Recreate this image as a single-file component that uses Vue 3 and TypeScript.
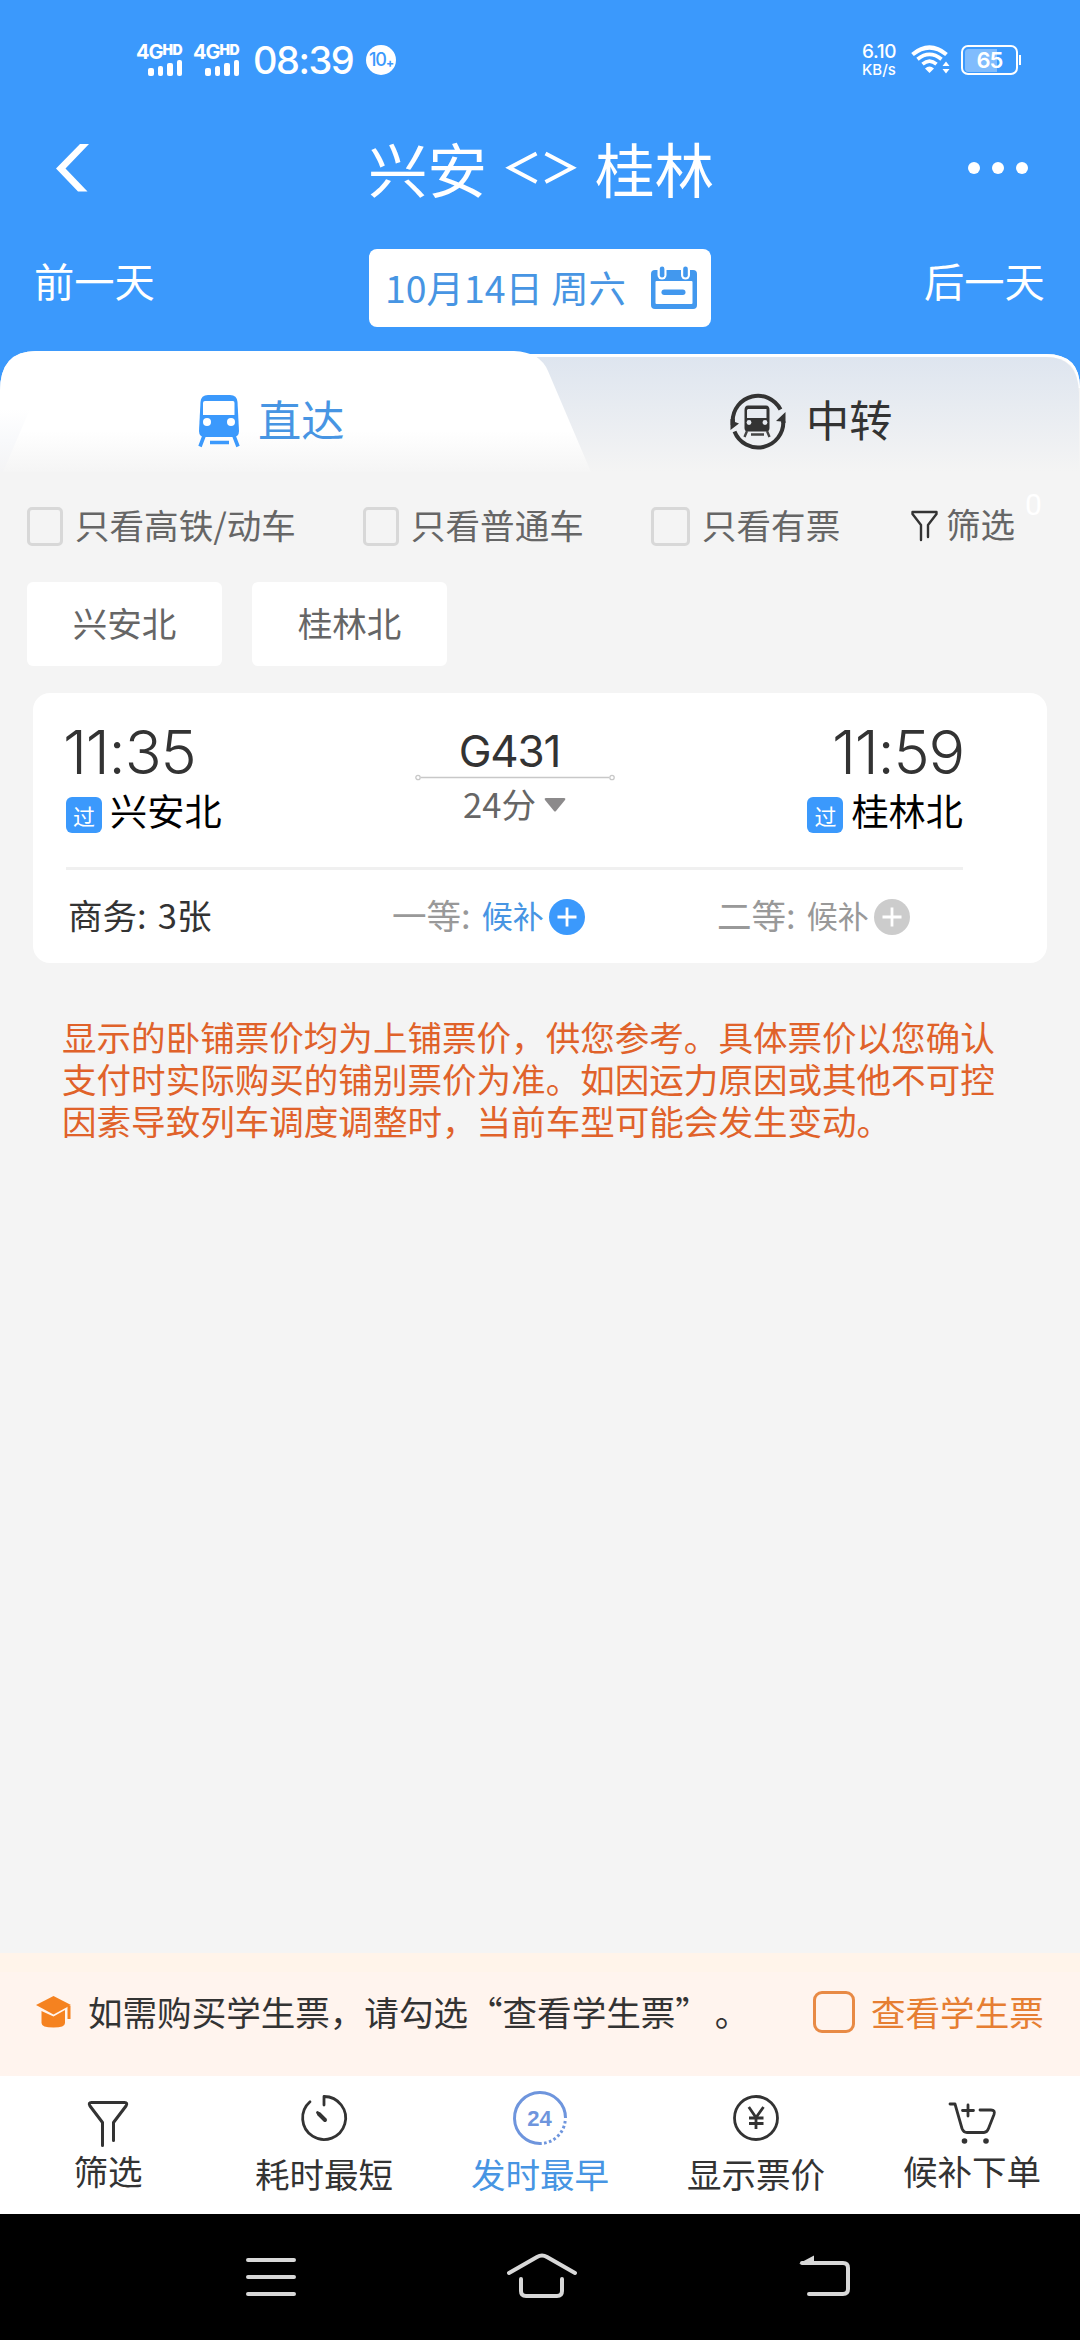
<script setup lang="ts">
interface Filter { label: string; wide?: boolean }
interface Stop { time: string; name: string }
interface Seat { label: string; value: string; state: 'open' | 'wait' | 'closed' }
interface Sort { label: string; icon: string; active?: boolean; high?: boolean }

const filters: Filter[] = [
  { label: '只看高铁/动车' },
  { label: '只看普通车' },
  { label: '只看有票', wide: true },
]
const stations: string[] = ['兴安北', '桂林北']
const from: Stop = { time: '11:35', name: '兴安北' }
const to: Stop = { time: '11:59', name: '桂林北' }
const seats: Seat[] = [
  { label: '商务:', value: '3张', state: 'open' },
  { label: '一等:', value: '候补', state: 'wait' },
  { label: '二等:', value: '候补', state: 'closed' },
]
const sorts: Sort[] = [
  { label: '筛选', icon: 'funnel', high: true },
  { label: '耗时最短', icon: 'clock' },
  { label: '发时最早', icon: 'early', active: true },
  { label: '显示票价', icon: 'price' },
  { label: '候补下单', icon: 'cart', high: true },
]
const bars: number[] = [8, 10, 13, 16]
</script>

<template>
  <div class="screen">
    <header class="head">
      <div class="status">
        <div v-for="n in 2" :key="n" class="sim">
          <span class="net">4G<b>HD</b></span>
          <span class="bars"><i v-for="h in bars" :key="h" :style="{ height: h + 'px' }"></i></span>
        </div>
        <span class="clock">08:39</span>
        <span class="badge10">10<b>+</b></span>
        <span class="grow"></span>
        <span class="speed"><span>6.10</span><small>KB/s</small></span>
        <svg class="wifi" width="40" height="30" viewBox="0 0 40 30" fill="none" stroke="#fff">
          <path d="M1.500 9.500Q18.500 -4.500 35.500 9.500" stroke-width="4.200" />
          <path d="M6.500 14.300Q18.500 4.500 30.500 14.300" stroke-width="3.800" />
          <path d="M11.500 19.200Q18.500 13 25.500 19.200" stroke-width="3.600" />
          <path d="M14 23.500Q18.500 19.500 23 23.500L18.500 28Z" fill="#fff" stroke="none" />
          <path d="M31.500 21L35 16.500L38.500 21ZM31.500 24L35 28.500L38.500 24Z" fill="#fff" stroke="none" />
        </svg>
        <span class="battery"><span>65</span></span>
        <i class="nub"></i>
      </div>
      <div class="title">
        <svg class="back" width="34" height="48" viewBox="0 0 34 48"><path d="M24 0H33L9.500 24.500L31.500 47.500H22L0 24.500Z" fill="#fff" /></svg>
        <h1><span>兴安</span><svg width="68" height="34" viewBox="0 0 68 34" fill="none" stroke="#fff" stroke-width="4"><path d="M29.500 2.500L2.500 16.800L29.500 31M38.500 2.500L65.500 16.800L38.500 31" /></svg><span>桂林</span></h1>
        <div class="more"><i></i><i></i><i></i></div>
      </div>
      <div class="days">
        <span class="day">前一天</span>
        <div class="date">
          <span>10月14日 周六</span>
          <svg width="46" height="44" viewBox="0 0 46 44">
            <rect x="0" y="4" width="46" height="39" rx="4" fill="#4298ee" />
            <rect x="4.500" y="15" width="37" height="23" rx="1" fill="#fff" />
            <rect x="6.500" y="-3" width="9" height="16.500" rx="4.500" fill="#fff" />
            <rect x="30" y="-3" width="9" height="16.500" rx="4.500" fill="#fff" />
            <rect x="8.800" y="0.500" width="4.600" height="11" rx="2.300" fill="#4298ee" />
            <rect x="32.200" y="0.500" width="4.600" height="11" rx="2.300" fill="#4298ee" />
            <rect x="10.500" y="23.500" width="24" height="5.500" rx="2.700" fill="#4298ee" />
          </svg>
        </div>
        <span class="day">后一天</span>
      </div>
    </header>

    <nav class="tabs">
      <svg class="tabs-bg" width="1080" height="124" viewBox="0 0 1080 124">
        <defs>
          <linearGradient id="grey" x1="0" y1="0" x2="0" y2="1"><stop offset="0" stop-color="#dee5ef" /><stop offset="1" stop-color="#f4f4f4" /></linearGradient>
          <linearGradient id="white" x1="0" y1="0" x2="0" y2="1"><stop offset="0.660" stop-color="#fff" /><stop offset="1" stop-color="#f5f5f5" /></linearGradient>
          <linearGradient id="edge" x1="0" y1="0" x2="0" y2="1"><stop offset="0" stop-color="#fff" /><stop offset="0.500" stop-color="#f8f9fb" /><stop offset="1" stop-color="#f4f4f5" /></linearGradient>
        </defs>
        <rect width="1080" height="124" fill="#3b99fc" />
        <path d="M0 40V124H1080V37Q1080 3 1046 3H500V0H36Q0 0 0 40Z" fill="#f4f4f4" />
        <path d="M480 3H1046Q1080 3 1080 37H1078Q1078 6 1046 6H480Z" fill="#fff" />
        <path d="M480 6H1046Q1078 6 1079 42V121H480Z" fill="url(#grey)" />
        <path d="M0 40Q0 0 36 0H514Q540 1 548 20L591 121H0Z" fill="url(#white)" />
        <path d="M0 58H30L3 121H0Z" fill="url(#edge)" />
      </svg>
      <div class="tab active">
        <svg width="42" height="52" viewBox="0 0 42 52">
          <path d="M10 0H32Q39 0 39.500 7L41 36Q41 42 35 42H7Q1 42 1 36L2.500 7Q3 0 10 0Z" fill="#3b99fc" />
          <path d="M7 6H35Q36.500 6 36.500 8V20H5V8Q5 6 7 6Z" fill="#fff" />
          <circle cx="9" cy="27" r="4" fill="#fff" /><circle cx="33" cy="27" r="4" fill="#fff" />
          <path d="M6 41L2 51.500M36 41L40 51.500M12 47.500H31" stroke="#3b99fc" stroke-width="3.600" />
        </svg>
        <span>直达</span>
      </div>
      <div class="tab">
        <svg width="56" height="56" viewBox="0 0 56 56" fill="none">
          <path d="M2.700 32V28A25.300 25.300 0 0 1 50.500 16.500" stroke="#333" stroke-width="4" />
          <path d="M4.500 38.500A25.300 25.300 0 0 0 53.300 28" stroke="#333" stroke-width="4" />
          <path d="M0.500 37V26H4.700L5 29L9 30.500Z M55.500 19V30H51.300V28.500L46 28Z" fill="#333" />
          <path d="M18 12.500H36Q39.500 12.500 39.500 17V35Q39.500 38.500 36 38.500H18Q14.500 38.500 14.500 35V17Q14.500 12.500 18 12.500Z" fill="#333" />
          <path d="M18 16H36.500V25H17V17Z" fill="#e7ebf1" />
          <circle cx="19" cy="29.500" r="2.400" fill="#e7ebf1" /><circle cx="35" cy="29.500" r="2.400" fill="#e7ebf1" />
          <path d="M17 38L14.500 44M37 38L39.500 44M21 41.500H34" stroke="#444" stroke-width="2.400" />
        </svg>
        <span>中转</span>
      </div>
    </nav>

    <main class="body">
      <div class="filters">
        <label v-for="f in filters" :key="f.label" class="filter"><i :class="{ wide: f.wide }"></i><span>{{ f.label }}</span></label>
        <div class="sift">
          <svg width="27" height="32" viewBox="0 0 27 32" fill="none" stroke="#333" stroke-width="2.400" stroke-linecap="round" stroke-linejoin="round"><path d="M10 30V15L1.500 4V2H25.500V4L17 15V27" /></svg>
          <span>筛选</span><sup>0</sup>
        </div>
      </div>
      <div class="chips"><button v-for="s in stations" :key="s">{{ s }}</button></div>

      <section class="card">
        <div class="trip">
          <div class="stop">
            <span class="time">{{ from.time }}</span>
            <span class="place"><i>过</i>{{ from.name }}</span>
          </div>
          <div class="train">
            <span class="no">G431</span>
            <svg width="200" height="7" viewBox="0 0 200 7" fill="none" stroke="#c8c8c8" stroke-width="1.300"><path d="M6 3.500H194" /><circle cx="3" cy="3.500" r="2.200" /><circle cx="197" cy="3.500" r="2.200" /></svg>
            <span class="dur">24分<svg width="22" height="14" viewBox="0 0 22 14"><path d="M2 0H20Q22 0 21 2L12 13Q11 14 10 13L1 2Q0 0 2 0Z" fill="#8c8a8b" /></svg></span>
          </div>
          <div class="stop right">
            <span class="time">{{ to.time }}</span>
            <span class="place"><i>过</i>{{ to.name }}</span>
          </div>
        </div>
        <div class="seats">
          <div v-for="s in seats" :key="s.label" class="seat" :class="s.state">
            <span>{{ s.label }}</span><em>{{ s.value }}</em>
            <svg v-if="s.state !== 'open'" width="36" height="36" viewBox="0 0 36 36"><circle cx="18" cy="18" r="18" fill="currentColor" /><path d="M8.500 18H27.500M18 8.500V27.500" stroke="#fff" stroke-width="2.800" /></svg>
          </div>
        </div>
      </section>

      <p class="notice">显示的卧铺票价均为上铺票价，供您参考。具体票价以您确认支付时实际购买的铺别票价为准。如因运力原因或其他不可控因素导致列车调度调整时，当前车型可能会发生变动。</p>
    </main>

    <aside class="student">
      <svg width="36" height="32" viewBox="0 0 36 32" fill="#f58220">
        <path d="M17.500 0L35 9L17.500 18.500L0 9Z" /><path d="M5.500 15L17.500 20.500L29 14V27Q29 31.500 17.500 31.500Q5.500 31.500 5.500 27Z" /><path d="M31.500 10H34.500V23H31.500Z" />
      </svg>
      <span class="hint">如需购买学生票，请勾选“查看学生票”<span class="stop-mark">。</span></span>
      <i class="box"></i>
      <span class="see">查看学生票</span>
    </aside>

    <nav class="sorts">
      <div v-for="s in sorts" :key="s.label" class="sort" :class="{ active: s.active, high: s.high }">
        <svg width="60" height="60" viewBox="0 0 60 60" fill="none" stroke="#333" stroke-width="2.800" stroke-linecap="round" stroke-linejoin="round">
          <path v-if="s.icon === 'funnel'" d="M24.500 57.500V34.500L12 18Q10 14.500 13.500 14.500H46.500Q50 14.500 48 18L35.500 34.500V52.500" stroke-width="3" />
          <template v-else-if="s.icon === 'clock'">
            <path d="M30 17V8.500A21.500 21.500 0 1 1 16 13.800" /><path d="M25 26L31 32" stroke-width="4" /><path d="M23.500 24.500L26 27" />
          </template>
          <template v-else-if="s.icon === 'early'">
            <path d="M31 55.500A25.500 25.500 0 1 1 55.500 30" stroke="#6e95dd" stroke-width="3" stroke-linecap="butt" />
            <path d="M55.200 33A25.500 25.500 0 0 1 31 55.500" stroke="#6e95dd" stroke-width="3" stroke-dasharray="2.600 2.400" stroke-linecap="butt" />
            <text x="29.500" y="38" text-anchor="middle" class="n24">24</text>
          </template>
          <template v-else-if="s.icon === 'price'">
            <circle cx="30" cy="30" r="21.500" /><path d="M22.800 19L30 29.500L37.500 19M30 29.500V41M23 30H37.500M23 35.500H37.500" stroke-linecap="butt" />
          </template>
          <template v-else>
            <path d="M8 16H13L20 40.500Q21.500 44.500 25 44.500H42Q45 44.500 46.500 40.500L52 26.500Q53.500 22 49 22H38" /><path d="M26 17V28M20.500 22.500H31.500" /><circle cx="22.500" cy="53" r="2.800" fill="#333" stroke="none" /><circle cx="44" cy="53" r="2.800" fill="#333" stroke="none" />
          </template>
        </svg>
        <span>{{ s.label }}</span>
      </div>
    </nav>

    <footer class="sys">
      <svg width="50" height="44" viewBox="0 0 50 44" stroke="#d8d8d8" stroke-width="4" stroke-linecap="round"><path d="M2 5H48M2 22H48M2 39H48" /></svg>
      <svg class="home" width="72" height="46" viewBox="0 0 72 46" fill="none" stroke="#d8d8d8" stroke-width="4" stroke-linecap="round" stroke-linejoin="round"><path d="M3 19L31 3Q36 0 41 3L69 19M15 25V37Q15 42 20 42H51Q56 42 56 37V25" /></svg>
      <svg width="52" height="44" viewBox="0 0 52 44" fill="none" stroke="#d8d8d8" stroke-width="4" stroke-linecap="round"><path d="M3 8H44Q49 8 49 13V34Q49 39 44 39H10" /><path d="M0 8.500L15 0.500V9Z" fill="#d8d8d8" stroke="none" /></svg>
    </footer>
  </div>
</template>

<style>
body { margin: 0; background: #f4f4f4; }
</style>

<style scoped>
.screen { width: 1080px; height: 2340px; display: flex; flex-direction: column; overflow: hidden; background: #f4f4f4; font-family: "Noto Sans CJK SC", sans-serif; font-size: 34.560px; line-height: 1; color: #333; text-spacing-trim: space-all; }
svg { display: block; flex: none; overflow: visible; }
i, em { font-style: normal; }
.grow { flex: 1; }

.head { height: 351px; background: #3b99fc; color: #fff; display: flex; flex-direction: column; }
.status { height: 120px; box-sizing: border-box; padding: 0 59px 0 136px; display: flex; align-items: center; font-family: Inter, sans-serif; }
.sim { width: 57px; height: 32px; display: flex; flex-direction: column; }
.net { height: 15px; display: flex; font-size: 20px; line-height: 16px; font-weight: 700; letter-spacing: -1px; }
.net b { font-size: 14px; line-height: 12px; letter-spacing: -0.500px; }
.bars { display: flex; align-items: flex-end; gap: 4px; height: 17px; padding-left: 12px; }
.bars i { width: 5.500px; background: #fff; border-radius: 2px; }
.clock { width: 111px; padding-left: 3px; box-sizing: border-box; font-size: 38px; font-weight: 500; letter-spacing: -1.500px; }
.badge10 { margin-left: 5px; width: 30px; height: 30px; border-radius: 50%; background: #fff; color: #3b99fc; display: flex; align-items: center; justify-content: center; font-size: 18px; letter-spacing: -1px; font-weight: 500; }
.badge10 b { font-size: 12px; margin-top: 6px; }
.speed { width: 49px; display: flex; flex-direction: column; font-size: 19px; line-height: 18px; font-weight: 500; letter-spacing: -0.400px; }
.speed small { font-size: 15px; line-height: 16px; letter-spacing: 0; margin-top: 1px; }
.wifi { margin-right: 10px; }
.battery { width: 57px; height: 30px; box-sizing: border-box; border: 2.500px solid #fff; border-radius: 7px; padding: 1.500px; display: flex; background: linear-gradient(90deg, #80bcfd 65%, transparent 65%) content-box; }
.battery span { flex: 1; text-align: center; font-size: 22px; line-height: 22px; font-weight: 600; letter-spacing: -1px; }
.nub { width: 2px; height: 10px; background: #fff; margin-left: 1px; }

.title { height: 96px; padding: 0 52px 0 56px; display: flex; align-items: center; justify-content: space-between; }
h1 { margin: 0 0 0 24px; font-size: 59.500px; font-weight: 400; line-height: 96px; display: flex; align-items: center; gap: 20px; }
h1 span { margin-top: -2px; }
.more { display: flex; gap: 12px; }
.more i { width: 12px; height: 12px; border-radius: 50%; background: #fff; }

.days { height: 135px; padding: 0 34px; display: flex; justify-content: space-between; align-items: flex-start; }
.day { width: 122px; font-size: 40.300px; line-height: 60px; padding-top: 34px; }
.date { margin-top: 33px; width: 342px; height: 78px; box-sizing: border-box; padding: 0 14px 0 16px; border-radius: 8px; background: #fff; color: #4795e3; font-size: 37.400px; display: flex; align-items: center; justify-content: space-between; white-space: nowrap; }
.date span { line-height: 74px; margin-top: -3px; }

.tabs { position: relative; height: 124px; display: flex; }
.tabs-bg { position: absolute; inset: 0; }
.tab { position: relative; flex: none; width: 540px; display: flex; align-items: center; gap: 20px; padding: 0 0 0 190px; height: 140px; box-sizing: border-box; font-size: 43.200px; }
.tab.active { padding: 0 0 0 198px; gap: 18px; color: #4795e3; }
.tab span { margin-top: -5px; }

.body { flex: 1; }
.filters { display: flex; height: 107px; padding-left: 27px; color: #666; align-items: center; line-height: 36px; box-sizing: border-box; padding-bottom: 4px; }
.filter { display: flex; align-items: center; white-space: nowrap; }
.filter span, .sift span { margin-top: -6px; }
.filter:nth-child(1) { width: 336px; }
.filter:nth-child(2) { width: 288px; }
.filter:nth-child(3) { width: 260px; }
.filter i { width: 36px; height: 39px; box-sizing: border-box; border: 3px solid #d8d8d8; border-radius: 5px; margin-right: 12px; }
.filter i.wide { width: 39px; }
.sift { display: flex; gap: 8px; align-items: center; margin-top: -2px; }
.sift sup { font: 30px/30px Roboto, sans-serif; color: #fff; margin: -42px 0 0 2px; }
.chips { display: flex; gap: 30px; padding-left: 27px; }
.chips button { width: 195px; height: 84px; border: 0; border-radius: 6px; background: #fff; color: #666; font: inherit; padding: 0 0 4px; }

.card { margin: 27px 33px 0; height: 270px; border-radius: 17px; background: #fff; padding: 0 84px 0 33px; box-sizing: border-box; }
.trip { height: 177px; box-sizing: border-box; border-bottom: 3px solid #f0f0f0; display: flex; justify-content: space-between; }
.stop { width: 170px; display: flex; flex-direction: column; padding-top: 28px; }
.right { align-items: flex-end; }
.time { font: 350 61px/62px Inter, sans-serif; letter-spacing: -1.200px; margin-left: -3px; }
.right .time { margin-right: -1px; }
.place { display: flex; align-items: center; color: #000; font-size: 37.200px; line-height: 54px; white-space: nowrap; }
.place i { width: 36px; height: 36px; line-height: 36px; border-radius: 6px; background: #3b99fc; color: #fff; font-size: 22px; text-align: center; margin: 10px 8px 0 0; }
.train { width: 200px; display: flex; flex-direction: column; align-items: center; padding-top: 36px; }
.no { font: 400 44px/44px Inter, sans-serif; height: 45px; letter-spacing: -1.200px; margin-right: 10px; }
.dur { display: flex; align-items: center; gap: 8px; color: #666; line-height: 44px; }
.dur svg { margin-top: 4px; }
.seats { display: flex; }
.seat { display: flex; align-items: center; height: 88px; color: #999; white-space: nowrap; }
.seat span { margin-right: 11px; }
.seat:nth-child(1) { width: 326px; color: #333; padding-left: 2px; box-sizing: border-box; }
.seat:nth-child(2) { width: 325px; }
.seat.wait em, .seat.closed em { font-size: 31px; }
.seat svg { margin: 5px 0 0 5px; }
.wait em { color: #4795e3; }
.wait svg { color: #3b99fc; }
.closed svg { color: #ccc; }

.notice { margin: 52px 80px 0 62px; width: 936px; line-height: 42.200px; color: #e0622a; word-break: break-all; }

.student { height: 123px; box-sizing: border-box; padding: 0 0 6px 36px; display: flex; align-items: center; background: linear-gradient(#fff4ea 19px, #fff4ee 19px); white-space: nowrap; }
.hint { margin-left: 16px; width: 725px; }
.stop-mark { margin-left: 5px; }
.box { width: 42px; height: 42px; box-sizing: border-box; border: 3px solid #e88a45; border-radius: 9px; margin-right: 16px; }
.see { color: #e67e32; }

.sorts { height: 138px; background: #fff; display: flex; }
.sort { flex: 1; display: flex; flex-direction: column; align-items: center; padding-top: 12px; line-height: 50px; }
.sort.high span { margin-top: -3px; }
.sort.active { color: #4795e3; }
.n24 { font: 700 22px "Liberation Sans", sans-serif; fill: #6e95dd; stroke: none; }

.sys { height: 126px; background: #000; display: flex; align-items: center; padding: 0 229px 0 246px; justify-content: space-between; }
.home { margin-left: -12px; }
</style>
